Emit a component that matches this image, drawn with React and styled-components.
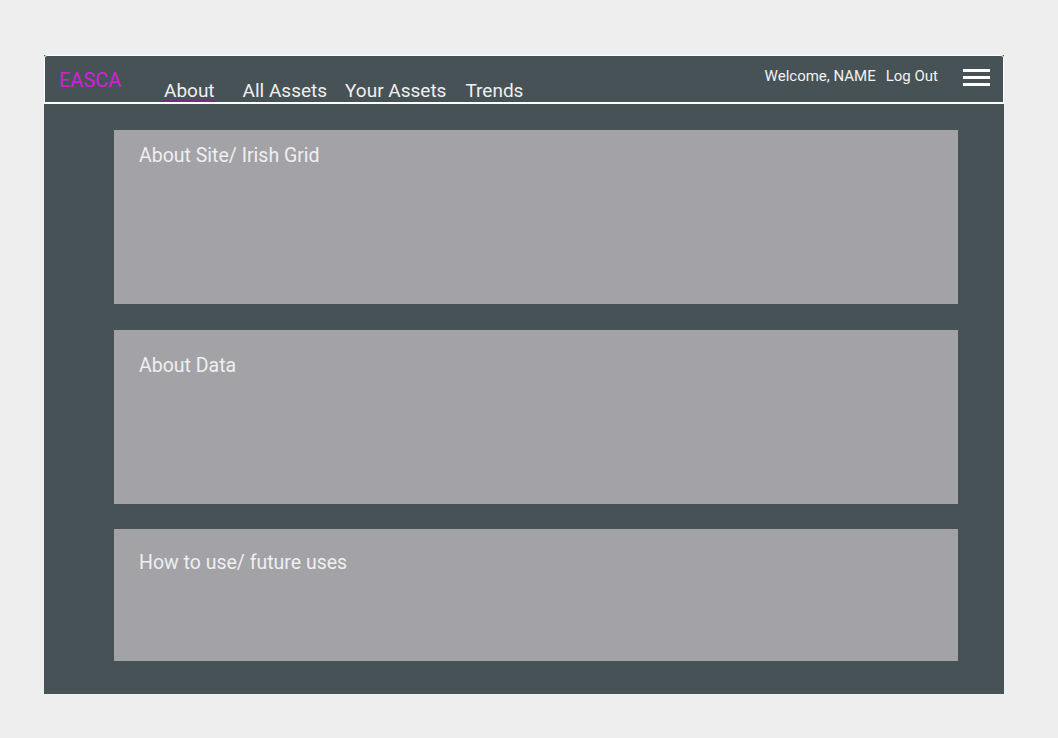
import React from 'react'
import styled, { createGlobalStyle } from 'styled-components'

const GlobalStyle = createGlobalStyle`
  body {
    margin: 0;
    background: #eeeeee;
    font-family: Roboto, "Liberation Sans", sans-serif;
  }
`

const Page = styled.div`
  padding: 55px 0 0 44px;
`

const Panel = styled.div`
  width: 960px;
  height: 639px;
  background: #465256;
  display: flex;
  flex-direction: column;
`

const NavBar = styled.nav`
  height: 46px;
  border: 1px solid #ffffff;
  border-bottom: 2px solid #ffffff;
  border-radius: 3px 3px 0 0;
  display: flex;
  align-items: stretch;
  padding: 0 13px 0 14px;
`

const Brand = styled.div`
  color: #d21fd6;
  font-size: 20px;
  padding-top: 12px;
  width: 104px;
`

const Links = styled.div`
  display: flex;
  padding-top: 23px;
  flex: 1;
`

const NavLink = styled.a`
  color: #f0f0f0;
  font-size: 19px;
  height: 21px;
  margin-right: ${p => p.gap}px;
  padding: 0 1px;
  border-bottom: ${p => (p.active ? '2px solid #7a2a86' : '2px solid transparent')};
  text-decoration: none;
`

const UserArea = styled.div`
  display: flex;
  align-items: flex-start;
  padding-top: 11px;
  color: #f2f2f2;
  font-size: 15px;
`

const UserText = styled.span`
  margin-right: ${p => p.gap}px;
`

const Burger = styled.div`
  width: 27px;
  display: flex;
  flex-direction: column;
  gap: 4px;
  margin-top: 2px;
  span {
    height: 3px;
    background: #ffffff;
  }
`

const Content = styled.div`
  display: flex;
  flex-direction: column;
  padding: 26px 46px 0 70px;
`

const Card = styled.section`
  height: ${p => p.h}px;
  margin-top: ${p => p.mt || 0}px;
  background: #a3a2a6;
  color: #efeff0;
  font-size: 19.5px;
  padding: ${p => p.pt}px 25px 0;
  box-sizing: border-box;
`

function App() {
  return (
    <Page>
      <GlobalStyle />
      <Panel>
        <NavBar>
          <Brand>EASCA</Brand>
          <Links>
            <NavLink active gap={26}>About</NavLink>
            <NavLink gap={16}>All Assets</NavLink>
            <NavLink gap={17}>Your Assets</NavLink>
            <NavLink gap={0}>Trends</NavLink>
          </Links>
          <UserArea>
            <UserText gap={10}>Welcome, NAME</UserText>
            <UserText gap={25}>Log Out</UserText>
            <Burger>
              <span />
              <span />
              <span />
            </Burger>
          </UserArea>
        </NavBar>
        <Content>
          <Card h={174} pt={14}>About Site/ Irish Grid</Card>
          <Card h={174} mt={26} pt={24}>About Data</Card>
          <Card h={132} mt={25} pt={22}>How to use/ future uses</Card>
        </Content>
      </Panel>
    </Page>
  )
}

export default App
